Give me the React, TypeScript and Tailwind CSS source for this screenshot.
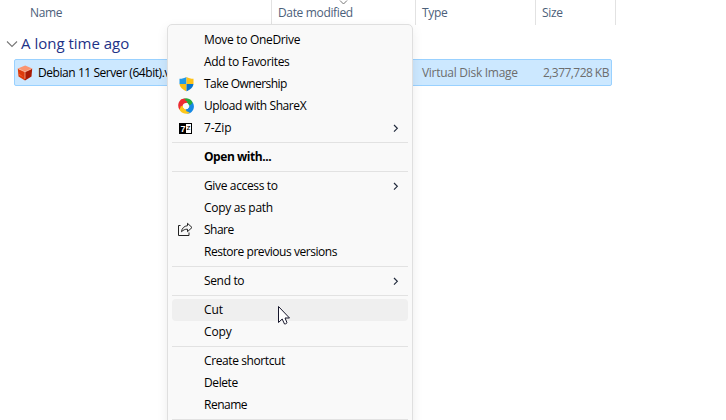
import type { ReactNode } from "react";

function Shield() {
  return (
    <svg className="ml-[2px]" width="15" height="16" viewBox="0 0 15 16">
      <path d="M7.500 1C5.500 2.300 3.200 2.700.5 2.800V8h7z" fill="#2199e5" />
      <path d="M7.500 1c2 1.300 4.300 1.700 7 1.800V8h-7z" fill="#fdc21a" />
      <path d="M.5 8h7v7.300C4 13.800 1 11.500.5 8z" fill="#f9bd17" />
      <path d="M14.500 8h-7v7.300C11 13.800 14 11.500 14.500 8z" fill="#0875cf" />
    </svg>
  );
}

function ShareX() {
  return (
    <svg className="ml-px" width="16" height="16" viewBox="0 0 16 16">
      <path d="M4.200 1.400C7 -.3 11.500 0 13.800 3c1 1.300 1.300 2.800 1 4.500L11.500 8C11.300 5.500 9.500 3.800 4.200 1.400z" fill="#27ab3c" />
      <path d="M14.500 4.200c2.200 3 1.800 7.300-1 9.800-1.400 1.200-2.900 1.600-4.500 1.500L8 11.500c2.500-.3 4.500-2.500 6.500-7.300z" fill="#1689e4" />
      <path d="M11.800 14.800c-3 1.800-7.200 1-9.500-1.800-1-1.300-1.500-2.800-1.300-4.500L4.500 8c.3 2.500 2.500 4.500 7.300 6.800z" fill="#fdc719" />
      <path d="M1.500 11.800C-.5 8.800-.2 4.500 2.500 2 3.800.9 6 .7 7.500 1l1 3C5.500 4.300 3.300 6.500 1.500 11.800z" fill="#ec2c32" />
      <path d="M7.500 1.200c2.500.3 4.500 2.300 4.700 5.500l-1.200.8C10.500 5.500 9.500 4.500 7.500 4z" fill="#27ab3c" />
      <path d="M3 5.500C4 3 6.500 2 9.500 3.400L8.500 5C6.500 4.800 5 6 4.500 8L2 9.800z" fill="#ec2c32" />
      <path d="M2.500 8.500 4.600 8c.2 1.800 1.500 3.300 3.400 3.500l2 2.500C6.500 14.500 3 12.500 2.500 8.500z" fill="#fdc719" />
      <path d="M11.400 7.500 13.500 6c.8 3.500-1 6.800-4.500 7.800L7.500 11.500c2.200.1 3.900-1.600 3.900-4z" fill="#1689e4" />
      <circle cx="8" cy="8" r="2.600" fill="#f9f9f9" />
    </svg>
  );
}

function SevenZip() {
  return (
    <span className="ml-[2px] flex h-[11px] w-[13px] border border-black bg-black font-['Liberation_Sans',sans-serif] text-[9px] leading-[10px] font-bold">
      <span className="w-[6px] text-center text-white">7</span>
      <span className="h-[9px] w-[5px] bg-white text-center text-[8px] leading-[8px] font-normal text-black">z</span>
    </span>
  );
}

function Share() {
  return (
    <svg className="ml-px" width="16" height="16" viewBox="0 0 16 16" fill="none" stroke="#222" strokeWidth="1">
      <path d="M2.500 3.500h-2v10h10.500v-3" />
      <path d="M9.500 1.300 14 5.500l-4.500 4.200V7.200C7 7 5.400 8 3.500 9.700c.3-3.500 2.800-5.700 6-6z" strokeLinejoin="round" />
    </svg>
  );
}

function Cube() {
  return (
    <svg width="16" height="16" viewBox="0 0 16 16">
      <path d="M.8 3.600 8 6.800v8.600L1.500 11.600z" fill="#dc3b0c" />
      <path d="M15.200 3.600 8 6.800v8.600l6.500-3.800z" fill="#a91b04" />
      <path d="M.8 3.600 8.200.5l7 3.100L8 6.800z" fill="#fa9470" />
      <path d="m1.500 3.900 6.500 2.900 6.500-2.900M8 6.800v7" stroke="#ffc0a0" strokeWidth=".7" fill="none" />
      <path d="m2 8.500 5 4-4.700-2.500z" fill="#ff632e" />
    </svg>
  );
}

function Chevron() {
  return (
    <svg width="6" height="9" viewBox="0 0 6 9" fill="none" stroke="#222b3d" strokeWidth="1.200">
      <path d="m1 1 3.300 3.300L1 7.600" />
    </svg>
  );
}

type ItemProps = { label: string; track?: string; icon?: ReactNode; sub?: boolean; bold?: boolean; active?: boolean };

function Item({ label, track = "tracking-[-0.35px]", icon, sub, bold, active }: ItemProps) {
  return (
    <div className={`mx-1 flex h-[22px] items-center rounded pr-[9px] pl-[5px] ${active ? "bg-[#efefef]" : ""}`}>
      <span className="flex w-[27px] items-center">{icon}</span>
      <span className={`flex-1 whitespace-nowrap ${bold ? "font-bold" : ""} ${track}`}>{label}</span>
      {sub && <Chevron />}
    </div>
  );
}

function Separator() {
  return <div className="mx-1 my-[3px] h-px bg-[#e2e2e2]" />;
}

export default function App() {
  return (
    <div className="relative h-[420px] w-[726px] overflow-hidden bg-white font-['Open_Sans','Noto_Sans',sans-serif] text-[12px] leading-[16px] text-black">
      <div className="flex h-[25px] tracking-[-0.35px] text-[#4c607a]">
        <div className="w-[272px] border-r border-[#e2e2e2] pt-[5px] pl-[30px]">Name</div>
        <div className="relative w-[144px] border-r border-[#e2e2e2] pt-[5px] pl-[6px]">
          Date modified
          <svg className="absolute top-0 left-[67px]" width="9" height="5" viewBox="0 0 9 5" fill="none" stroke="#777">
            <path d="m1 .5 3.500 3.500L8 .5" />
          </svg>
        </div>
        <div className="w-[120px] border-r border-[#e2e2e2] pt-[5px] pl-[6px]">Type</div>
        <div className="w-[80px] border-r border-[#e2e2e2] pt-[5px] pl-[6px]">Size</div>
      </div>
      <div className="flex h-[34px] items-center pt-[3px] pl-[6px] text-[#1e3287]">
        <svg width="12" height="8" viewBox="0 0 12 8" fill="none" stroke="#777" strokeWidth="1.100">
          <path d="m1 1.500 5 5 5-5" />
        </svg>
        <span className="relative -top-px ml-[3px] text-[15px]">A long time ago</span>
      </div>
      <div className="ml-[14px] flex h-[27px] w-[598px] items-center rounded-[2px] border border-[#99d1ff] bg-[#cce8ff]">
        <span className="ml-[2px] w-[21px]"><Cube /></span>
        <span className="w-[384px] tracking-[-0.44px]">Debian 11 Server (64bit).vdi</span>
        <span className="w-[121px] tracking-[-0.28px] text-[#6d6d6d]">Virtual Disk Image</span>
        <span className="w-[65px] text-right tracking-[-0.55px] whitespace-nowrap text-[#6d6d6d]">2,377,728 KB</span>
      </div>
      <div className="absolute top-[24px] left-[167px] h-[440px] w-[246px] rounded-[5px] border border-[#dfdfdf] bg-[#f9f9f9] pt-[4px] shadow-[0_4px_12px_rgba(0,0,0,0.08)]">
        <Item label="Move to OneDrive" track="tracking-[-0.32px]" />
        <Item label="Add to Favorites" track="tracking-[-0.33px]" />
        <Item label="Take Ownership" track="tracking-[-0.55px]" icon={<Shield />} />
        <Item label="Upload with ShareX" track="tracking-[-0.42px]" icon={<ShareX />} />
        <Item label="7-Zip" track="tracking-[-0.1px]" icon={<SevenZip />} sub />
        <Separator />
        <Item label="Open with..." track="tracking-[-0.45px]" bold />
        <Separator />
        <Item label="Give access to" sub />
        <Item label="Copy as path" track="tracking-[-0.3px]" />
        <Item label="Share" track="tracking-[-0.5px]" icon={<Share />} />
        <Item label="Restore previous versions" track="tracking-[-0.45px]" />
        <Separator />
        <Item label="Send to" sub />
        <Separator />
        <Item label="Cut" track="tracking-[-0.1px]" active />
        <Item label="Copy" track="tracking-[-0.1px]" />
        <Separator />
        <Item label="Create shortcut" track="tracking-[-0.4px]" />
        <Item label="Delete" track="tracking-[-0.4px]" />
        <Item label="Rename" track="tracking-[-0.5px]" />
        <Separator />
      </div>
      <svg className="absolute top-[305px] left-[277px]" width="14" height="21" viewBox="0 0 14 21" fill="#fff" stroke="#16162b">
        <path d="M1.500 1.500v16l3.700-3.500 2.300 5c1.600 0 2.700-.7 2.300-1.800L8 13h4.500z" strokeWidth="1" />
      </svg>
    </div>
  );
}
